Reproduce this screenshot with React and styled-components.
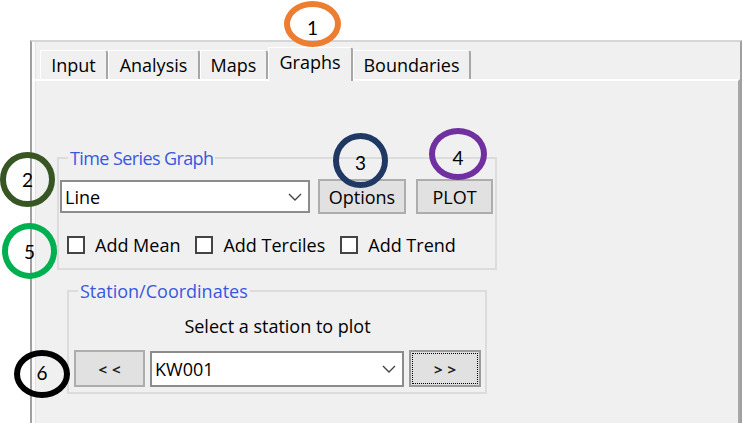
import React from 'react';
import styled, { createGlobalStyle } from 'styled-components';

const GlobalStyle = createGlobalStyle`
  body {
    margin: 0;
    background: #fff;
    font-family: 'Open Sans', 'Noto Sans', sans-serif;
    color: #000;
  }
`;

const tabs = [
  { label: 'Input', w: 68 },
  { label: 'Analysis', w: 92 },
  { label: 'Maps', w: 68 },
  { label: 'Graphs', w: 85, active: true },
  { label: 'Boundaries', w: 118 },
];

// callout circles drawn over the screenshot
const callouts = [
  { n: 1, x: 284, y: 1, w: 57, h: 46, color: '#ed7d31', dy: 3 },
  { n: 2, x: 0, y: 152, w: 55, h: 55, color: '#375623', dy: 0 },
  { n: 3, x: 333, y: 133, w: 55, h: 55, color: '#1f3864', dy: 2 },
  { n: 4, x: 429, y: 128, w: 58, h: 52, color: '#7030a0', dy: 3 },
  { n: 5, x: 2, y: 223, w: 55, h: 56, color: '#00b050', dy: 0 },
  { n: 6, x: 14, y: 350, w: 56, h: 48, color: '#000000', dy: -2 },
];

function Chevron() {
  return (
    <svg width="14" height="8" viewBox="0 0 14 8">
      <polyline points="1,1 7,7 13,1" fill="none" stroke="#444" strokeWidth="1.4" />
    </svg>
  );
}

function App() {
  return (
    <>
      <GlobalStyle />
      <Canvas>
        <Frame>
          <TabStrip>
            {tabs.map((t) => (
              <Tab key={t.label} $w={t.w} $active={t.active}>
                {t.label}
              </Tab>
            ))}
          </TabStrip>
          <Panel>
            <GroupBox $w={440} $pad="11px 2px 14px 1px">
              <Legend $ml={8} $ls={-0.6}>Time Series Graph</Legend>
              <ControlRow $gap={8}>
                <Combo $w={250} $h={33}>
                  <span>Line</span>
                  <Chevron />
                </Combo>
                <Button $w={88}>Options</Button>
                <Button $w={77} style={{ marginLeft: 2 }}>PLOT</Button>
              </ControlRow>
              <CheckRow>
                <CheckItem>
                  <Box />
                  Add Mean
                </CheckItem>
                <CheckItem>
                  <Box />
                  Add Terciles
                </CheckItem>
                <CheckItem>
                  <Box />
                  Add Trend
                </CheckItem>
              </CheckRow>
            </GroupBox>
            <GroupBox $w={420} $pad="13px 4px 5px 5px" $mt={11} $ml={10}>
              <Legend $ml={4}>Station/Coordinates</Legend>
              <Hint>Select a station to plot</Hint>
              <ControlRow $gap={5} $mt={12}>
                <Button $w={71} $h={37}>
                  <Arrows>&lt;&lt;</Arrows>
                </Button>
                <Combo $w={254} $h={36}>
                  <span>KW001</span>
                  <Chevron />
                </Combo>
                <Button $w={72} $h={37} $focused>
                  <Arrows>&gt;&gt;</Arrows>
                </Button>
              </ControlRow>
            </GroupBox>
          </Panel>
        </Frame>
        {callouts.map((c) => (
          <Callout
            key={c.n}
            $color={c.color}
            style={{ left: c.x, top: c.y, width: c.w, height: c.h }}
          >
            <span style={{ transform: `translateY(${c.dy}px)` }}>{c.n}</span>
          </Callout>
        ))}
      </Canvas>
    </>
  );
}

const Canvas = styled.div`
  position: relative;
  width: 742px;
  height: 423px;
  padding: 40px 0 0 30px;
  box-sizing: border-box;
  overflow: hidden;
`;
const Frame = styled.div`
  height: 100%;
  box-sizing: border-box;
  display: flex;
  flex-direction: column;
  background: #f0f0f0;
  border-top: 2px solid #d6d6d6;
  border-left: 2px solid #a0a0a0;
  border-right: 2px solid #a0a0a0;
  box-shadow: inset 3px 0 #fbfbfb, inset 4px 0 #e2e2e2;
`;
const TabStrip = styled.div`
  position: relative;
  z-index: 1;
  display: flex;
  align-items: flex-end;
  padding: 5px 0 0 8px;
  height: 32px;
`;
const Tab = styled.div`
  width: ${(p) => p.$w}px;
  height: ${(p) => (p.$active ? 34 : 29)}px;
  margin-bottom: ${(p) => (p.$active ? -2 : 0)}px;
  box-sizing: border-box;
  background: #f0f0f0;
  border-top: 1px solid #fff;
  border-left: 1px solid #fff;
  border-right: 2px solid #a6a6a6;
  border-top-right-radius: 3px;
  font-size: 18px;
  line-height: 28px;
  text-align: center;
  white-space: nowrap;
`;
const Panel = styled.div`
  flex: 1;
  border-top: 2px solid #fff;
  border-right: 2px solid #a8a8a8;
  padding: 0 0 0 25px;
  display: flex;
  flex-direction: column;
  align-items: flex-start;
`;
const GroupBox = styled.fieldset`
  width: ${(p) => p.$w}px;
  box-sizing: border-box;
  margin: ${(p) => p.$mt || 67}px 0 0 ${(p) => p.$ml || 0}px;
  padding: ${(p) => p.$pad};
  border: 2px solid #dcdcdc;
  min-width: 0;
`;
const Legend = styled.legend`
  margin-left: ${(p) => p.$ml}px;
  padding: 0 2px;
  font-size: 18px;
  line-height: 20px;
  letter-spacing: ${(p) => p.$ls || 0}px;
  color: #3858e0;
`;
const ControlRow = styled.div`
  display: flex;
  align-items: center;
  gap: ${(p) => p.$gap}px;
  margin-top: ${(p) => p.$mt || 0}px;
`;
const Combo = styled.div`
  width: ${(p) => p.$w}px;
  height: ${(p) => p.$h}px;
  box-sizing: border-box;
  display: flex;
  align-items: center;
  justify-content: space-between;
  padding: 0 6px 0 3px;
  background: #fff;
  border: 2px solid #8c8c8c;
  font-size: 18px;
`;
const Button = styled.div`
  width: ${(p) => p.$w}px;
  height: ${(p) => p.$h || 35}px;
  box-sizing: border-box;
  display: flex;
  align-items: center;
  justify-content: center;
  background: #e1e1e1;
  border: 2px solid ${(p) => (p.$focused ? '#9a9a9a' : '#adadad')};
  outline: ${(p) => (p.$focused ? '1px dotted #000' : 'none')};
  outline-offset: -4px;
  font-size: 18px;
`;
const Arrows = styled.span`
  font-size: 15px;
  font-weight: 700;
  letter-spacing: 5px;
  margin-right: -5px;
  color: #222;
`;
const CheckRow = styled.div`
  display: flex;
  gap: 15px;
  margin: 22px 0 0 7px;
  height: 18px;
  align-items: center;
`;
const CheckItem = styled.label`
  display: flex;
  align-items: center;
  gap: 10px;
  font-size: 18px;
  line-height: 18px;
  white-space: nowrap;
`;
const Box = styled.span`
  width: 18px;
  height: 18px;
  box-sizing: border-box;
  background: #fff;
  border: 2px solid #444;
`;
const Hint = styled.div`
  text-align: center;
  font-size: 18px;
  line-height: 24px;
`;
const Callout = styled.div`
  position: absolute;
  z-index: 5;
  box-sizing: border-box;
  border: 6px solid ${(p) => p.$color};
  border-radius: 50%;
  display: flex;
  align-items: center;
  justify-content: center;
  font-family: 'Lato', 'Liberation Sans', sans-serif;
  font-size: 19px;
  color: #000;
`;

export default App;
